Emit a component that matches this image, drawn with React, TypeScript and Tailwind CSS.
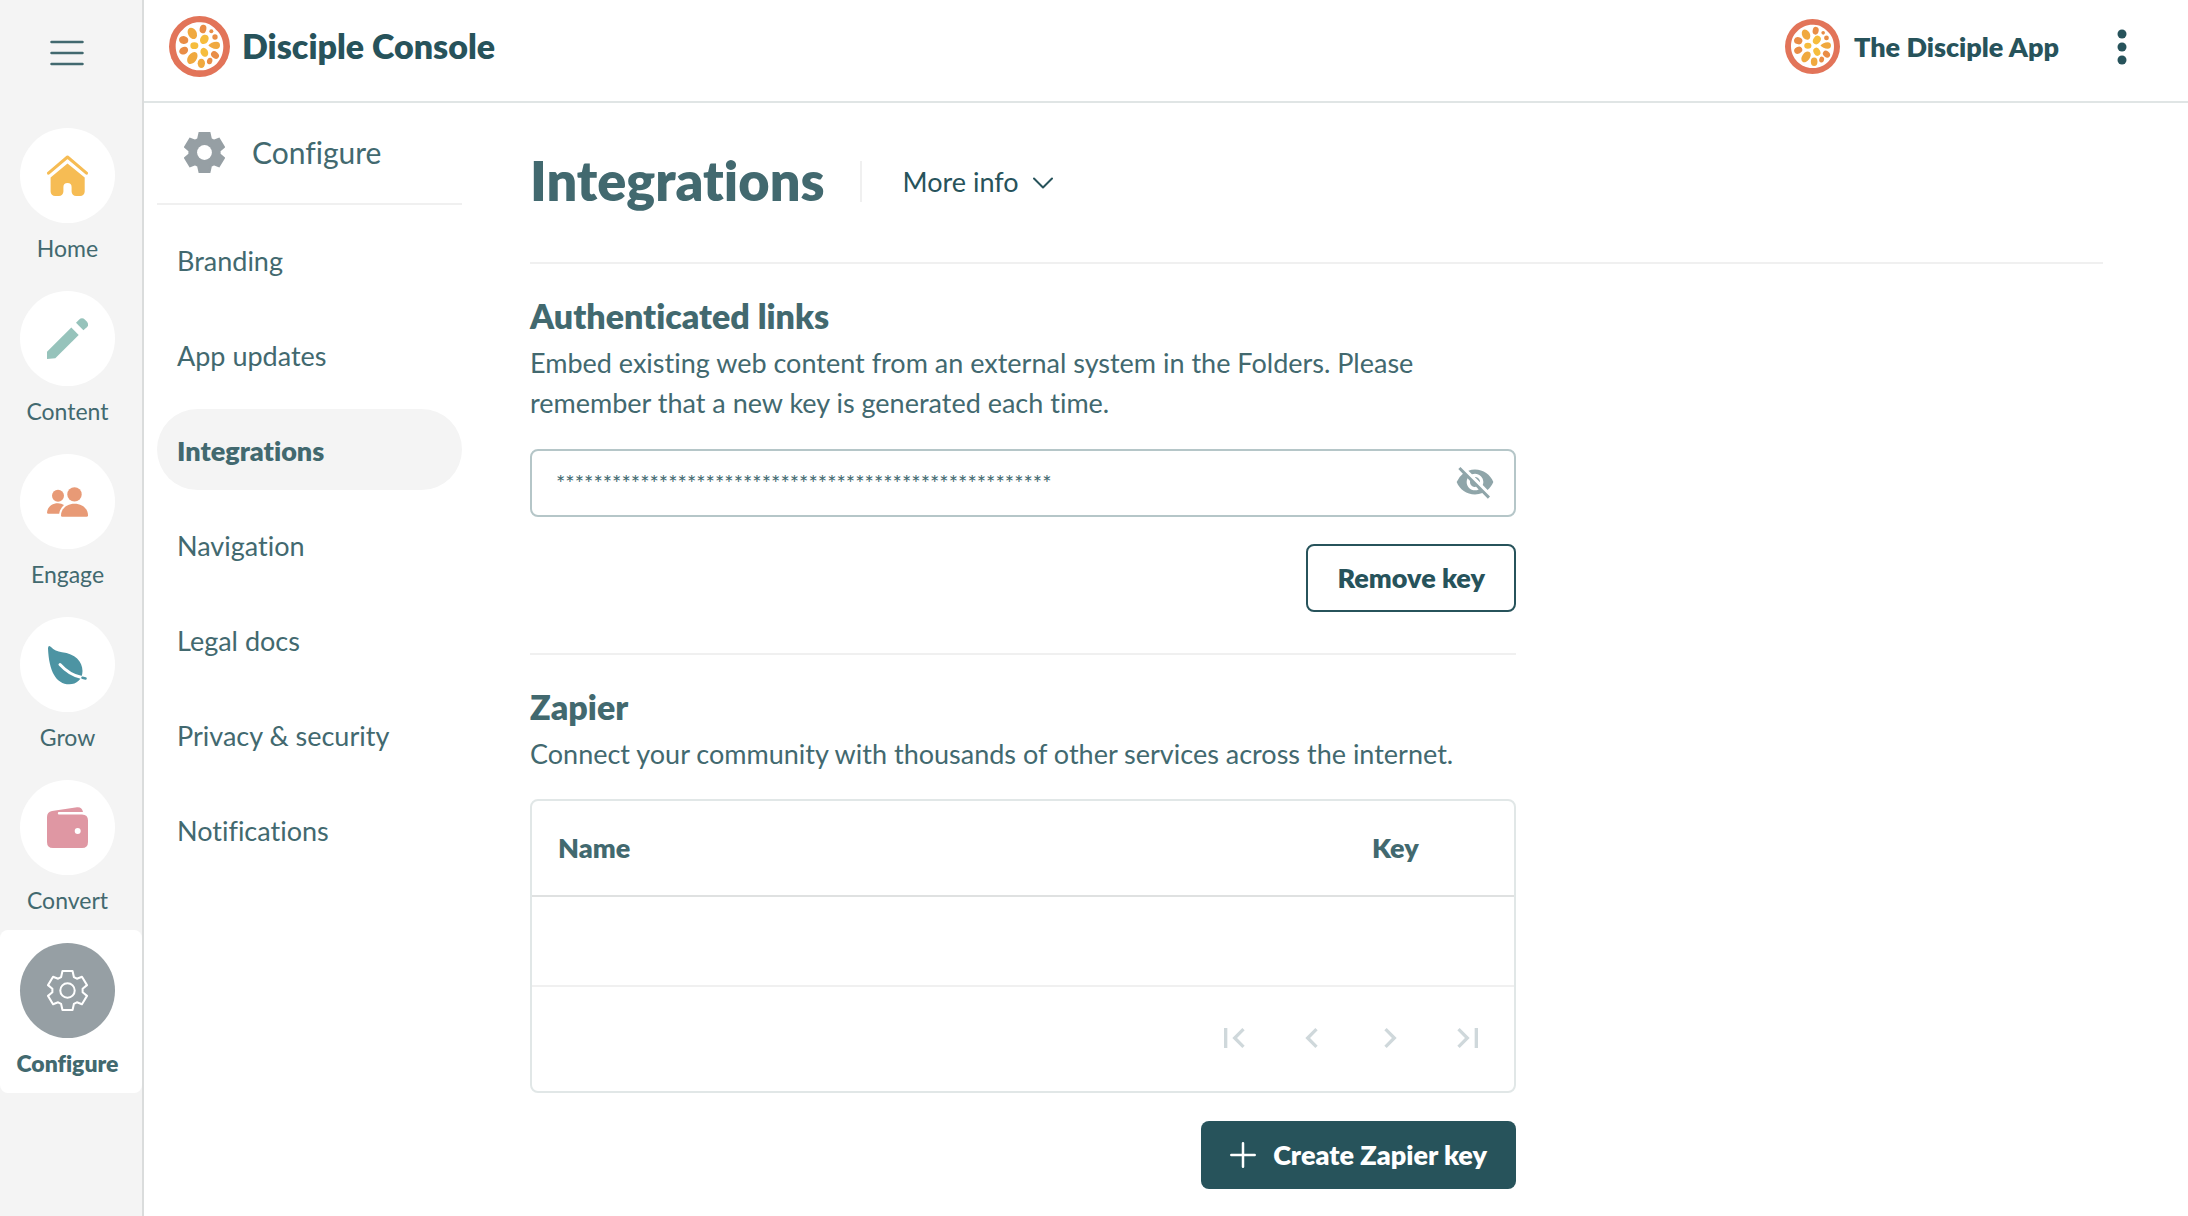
import { useState } from "react";
import type { ReactNode } from "react";
import {
  MdChevronLeft,
  MdChevronRight,
  MdFirstPage,
  MdLastPage,
  MdVisibilityOff,
} from "react-icons/md";

interface NavItem {
  label: string;
  icon: ReactNode;
}

const MASKED_KEY = "*".repeat(53);

const GEAR_PATH =
  "M-15-58H15L19-40L28-35L43-41L58-16L45-5V5L58 16L43 41L28 35L19 40L15 58H-15L-19 40L-28 35L-43 41L-58 16L-45 5V-5L-58-16L-43-41L-28-35L-19-40Z";

function HomeIcon() {
  return (
    <svg viewBox="0 0 41 41" className="size-[41px]" fill="#f6bc54">
      <path d="M1.5 18.2L20.5 2l19 16.2" fill="none" stroke="#f6bc54" strokeWidth="3" strokeLinecap="round" strokeLinejoin="round" />
      <path d="M20.5 8.6l17.2 14v13.9a4.5 4.5 0 0 1-4.5 4.5h-4.1a4.5 4.5 0 0 1-4.5-4.5v-4.4a4.1 4.1 0 0 0-8.2 0v4.4a4.5 4.5 0 0 1-4.5 4.5H8.1a4.5 4.5 0 0 1-4.5-4.5V22.6z" />
    </svg>
  );
}

function PencilIcon() {
  return (
    <svg viewBox="0 0 41 41" className="size-[41px]" fill="#96c3bb">
      <path d="M0 41v-7.3L24.3 9.6l7.4 7.4L8.3 40.3z" />
      <path d="M29 4.7l3-3Q35-1 38 1.7l1.5 1.5q3 3.2.3 6l-3.4 3z" />
    </svg>
  );
}

function PeopleIcon() {
  return (
    <svg viewBox="0 0 41 41" className="size-[41px]" fill="#e89a76">
      <circle cx="11" cy="14.7" r="6" />
      <circle cx="27.5" cy="13.4" r="7.2" />
      <path d="M14 34.5C14 27.5 20 22.7 27.5 22.7S41 27.5 41 34.2q0 1.5-1.5 1.5H15.2Q14 35.7 14 34.5z" />
      <path d="M0 31.5C.5 26 5 22.3 11 22.3q3.5 0 6 1.7-4 3.4-4.8 8.7h-11Q0 32.7 0 31.5z" />
    </svg>
  );
}

function LeafIcon() {
  return (
    <svg viewBox="0 0 41 41" className="size-[41px]" fill="none" strokeLinecap="round">
      <path d="M1 4.5Q1 .2 4 3q4 4.5 11 5.2C28 9.5 35.5 17.5 35.5 27c0 8.5-6 13.3-13.2 13.3C9 40.3 2 27 1 4.5z" fill="#4d94a3" />
      <path d="M13 20.5C18 26 25.5 31.5 34 33.3" stroke="#fff" strokeWidth="3" />
      <path d="M35.5 33.8l3 .6" stroke="#4d94a3" strokeWidth="2.6" />
    </svg>
  );
}

function WalletIcon() {
  return (
    <svg viewBox="0 0 41 41" className="size-[41px]" fill="#df97a3">
      <path d="M0 10q0-5.2 5-6L30 .2q5-.6 6 4.8H12a1.2 1.2 0 0 0 0 2.4h23q6 0 6 6V35q0 6-6 6H6q-6 0-6-6z" />
      <circle cx="30.7" cy="24" r="3" fill="#fff" />
    </svg>
  );
}

function GearOutlineIcon() {
  return (
    <svg viewBox="-61 -61 122 122" className="size-[41px]" fill="none" stroke="#fff" strokeWidth="6" strokeLinejoin="round">
      <path d={GEAR_PATH} />
      <circle r="21.5" />
    </svg>
  );
}

function GearIcon() {
  return (
    <svg viewBox="-61 -61 122 122" className="size-[41px]" fill="#969fa4" stroke="#969fa4" strokeWidth="6">
      <path d={GEAR_PATH} />
      <circle r="22" fill="#fff" stroke="none" />
    </svg>
  );
}

function Logo({ className }: { className: string }) {
  return (
    <svg viewBox="27 24 183 183" className={className} aria-hidden="true">
      <circle cx="118.5" cy="115.5" r="91.5" fill="#e27459" />
      <path d="M118 43c20-2 38 8 50 22 14 12 22 30 22 50s-6 38-20 52c-14 12-30 21-50 20-20 1-38-8-52-21-13-13-21-31-21-51s7-38 21-50c13-14 30-22 50-22z" fill="#fff" />
      <g fill="#e98d46">
        <ellipse cx="129" cy="63" rx="10" ry="13" transform="rotate(12 129 63)" />
        <circle cx="154" cy="70" r="6" />
        <circle cx="165" cy="87" r="8" />
        <ellipse cx="71" cy="96" rx="14" ry="12" transform="rotate(15 71 96)" />
        <ellipse cx="71" cy="128" rx="14" ry="11" transform="rotate(-28 71 128)" />
        <ellipse cx="165" cy="141" rx="13" ry="10" transform="rotate(40 165 141)" />
        <ellipse cx="149" cy="159" rx="8" ry="10" transform="rotate(15 149 159)" />
      </g>
      <g fill="#f0a93f">
        <ellipse cx="97" cy="76" rx="13" ry="18" transform="rotate(-28 97 76)" />
        <ellipse cx="97" cy="150" rx="13" ry="20" transform="rotate(35 97 150)" />
        <ellipse cx="124" cy="166" rx="11" ry="14" />
        <path d="M145 112c5-6 14-11 24-11 8 0 11 5 11 11s-3 11-11 11c-10 0-19-5-24-11z" />
      </g>
      <g fill="#f6bd3d">
        <ellipse cx="133" cy="94" rx="12" ry="15" transform="rotate(35 133 94)" />
        <ellipse cx="103" cy="113" rx="12" ry="10" />
        <ellipse cx="133" cy="133" rx="11" ry="14" transform="rotate(-28 133 133)" />
      </g>
    </svg>
  );
}

const mainNav: NavItem[] = [
  { label: "Home", icon: <HomeIcon /> },
  { label: "Content", icon: <PencilIcon /> },
  { label: "Engage", icon: <PeopleIcon /> },
  { label: "Grow", icon: <LeafIcon /> },
  { label: "Convert", icon: <WalletIcon /> },
  { label: "Configure", icon: <GearOutlineIcon /> },
];

const configureNav = [
  "Branding",
  "App updates",
  "Integrations",
  "Navigation",
  "Legal docs",
  "Privacy & security",
  "Notifications",
];

function Sidebar() {
  const active = "Configure";

  return (
    <aside className="w-36 shrink-0 border-r-2 border-[#dadcdc] bg-[#f4f4f4]">
      <button type="button" aria-label="Menu" className="mt-10 mb-[49px] ml-[50px] block">
        <svg viewBox="0 0 34 26" className="h-[26px] w-[34px]" stroke="#42696f" strokeWidth="2.5" strokeLinecap="round">
          <path d="M1.5 2h31M1.5 13h31M1.5 24h31" />
        </svg>
      </button>
      <nav>
        {mainNav.map((item) => (
          <a
            key={item.label}
            href="#"
            className={`flex flex-col items-center rounded-lg pt-[13px] pr-[7px] pb-[18px] ${
              item.label === active ? "bg-white font-extrabold" : ""
            }`}
          >
            <span
              className={`flex size-[95px] items-center justify-center rounded-full ${
                item.label === active ? "bg-[#969fa4]" : "bg-white"
              }`}
            >
              {item.icon}
            </span>
            <span className="mt-[13px] text-[23px] leading-6">{item.label}</span>
          </a>
        ))}
      </nav>
    </aside>
  );
}

function Header() {
  return (
    <header className="flex h-[103px] items-center justify-between border-b-2 border-[#e0e5e5] pr-[61px] pb-2 pl-[25px] font-extrabold text-[#27535b]">
      <div className="flex items-center gap-3">
        <Logo className="size-[61px]" />
        <span className="pb-0.5 text-[34px] leading-10">Disciple Console</span>
      </div>
      <div className="flex items-center">
        <Logo className="size-[55px]" />
        <span className="ml-3.5 text-[27px] leading-10">The Disciple App</span>
        <button type="button" aria-label="More options" className="ml-[58px]">
          <svg viewBox="0 0 10 36" className="h-9 w-2.5" fill="currentColor">
            <circle cx="5" cy="5" r="4.5" />
            <circle cx="5" cy="18" r="4.5" />
            <circle cx="5" cy="31" r="4.5" />
          </svg>
        </button>
      </div>
    </header>
  );
}

function SubNav() {
  const [active, setActive] = useState("Integrations");

  return (
    <div className="w-[305px] shrink-0">
      <div className="flex h-[102px] items-center gap-[27px] border-b-2 border-[#f0f0f0] pb-0.5 pl-[27px]">
        <GearIcon />
        <span className="text-[30px]">Configure</span>
      </div>
      <nav className="mt-3.5 flex flex-col gap-3.5">
        {configureNav.map((label) => (
          <a
            key={label}
            href="#"
            onClick={() => setActive(label)}
            className={`flex h-[81px] items-center rounded-full px-5 pt-[3px] text-[27px] ${
              label === active ? "bg-[#f4f4f4] font-extrabold" : ""
            }`}
          >
            {label}
          </a>
        ))}
      </nav>
    </div>
  );
}

function KeysTable() {
  return (
    <div className="mt-[25px] rounded-lg border-2 border-[#e1e7e7]">
      <table className="w-full table-fixed text-[27px]">
        <thead>
          <tr className="h-[95px] border-b-2 border-[#dfe1e1] text-left">
            <th className="pl-[26px] font-extrabold">Name</th>
            <th className="w-[142px] font-extrabold">Key</th>
          </tr>
        </thead>
        <tbody>
          <tr className="h-[90px] border-b-2 border-[#f0f0f0]">
            <td colSpan={2}></td>
          </tr>
        </tbody>
      </table>
      {/* Pagination */}
      <div className="flex h-[104px] items-center justify-end gap-[38px] pr-[26px] pb-0.5 text-[40px] text-[#cfd8db]">
        <button type="button" aria-label="First page">
          <MdFirstPage />
        </button>
        <button type="button" aria-label="Previous page">
          <MdChevronLeft />
        </button>
        <button type="button" aria-label="Next page">
          <MdChevronRight />
        </button>
        <button type="button" aria-label="Last page">
          <MdLastPage />
        </button>
      </div>
    </div>
  );
}

export default function App() {
  return (
    <div className="flex min-h-screen bg-white font-[Lato,sans-serif] text-[#42696f] [font-variant-ligatures:none]">
      <Sidebar />
      <div className="min-w-0 flex-1">
        <Header />
        <div className="flex gap-[68px] pr-[85px] pl-[13px]">
          <SubNav />

          <main className="min-w-0 flex-1">
            {/* Page title */}
            <div className="flex items-center border-b-2 border-[#f0f0f0] pt-[46px] pb-[49px]">
              <h1 className="text-[54px] leading-[64px] font-extrabold">Integrations</h1>
              <div className="ml-[35px] h-[41px] w-0.5 bg-[#f0f0f0]" />
              <button type="button" className="ml-[41px] flex items-center gap-3.5 pt-[3px] text-[27px] text-[#27535b]">
                More info
                <svg viewBox="0 0 20 12" className="h-3 w-5" fill="none" stroke="currentColor" strokeWidth="2" strokeLinecap="round" strokeLinejoin="round">
                  <path d="M1 1.5l9 9 9-9" />
                </svg>
              </button>
            </div>

            <div className="max-w-[986px]">
              {/* Authenticated links */}
              <section className="border-b-2 border-[#f0f0f0] pt-8 pb-[41px]">
                <h2 className="text-[34px] leading-10 font-extrabold">
                  <label htmlFor="auth-key">Authenticated links</label>
                </h2>
                <p className="mt-[7px] text-[27px] leading-10">
                  Embed existing web content from an external system in the Folders. Please remember that a new key is generated each time.
                </p>
                <div className="mt-[26px] flex h-[68px] items-center rounded-lg border-2 border-[#b5c6c8] pr-[19px] pb-0.5 pl-6">
                  <input
                    id="auth-key"
                    type="text"
                    readOnly
                    value={MASKED_KEY}
                    className="min-w-0 flex-1 bg-transparent text-[22px] outline-none"
                  />
                  <button type="button" aria-label="Show key" className="text-[40px] text-[#8fa5a9]">
                    <MdVisibilityOff />
                  </button>
                </div>
                <div className="mt-[27px] flex justify-end">
                  <button
                    type="button"
                    className="h-[68px] rounded-lg border-2 border-[#27535b] px-[29px] text-[27px] font-extrabold text-[#27535b]"
                  >
                    Remove key
                  </button>
                </div>
              </section>

              {/* Zapier */}
              <section className="pt-8 pb-[27px]">
                <h2 className="text-[34px] leading-10 font-extrabold">Zapier</h2>
                <p className="mt-[7px] text-[27px] leading-10">
                  Connect your community with thousands of other services across the internet.
                </p>
                <KeysTable />
                <div className="mt-7 flex justify-end">
                  <button
                    type="button"
                    className="flex h-[68px] items-center gap-[17px] rounded-lg bg-[#27535b] px-[29px] text-[27px] font-extrabold text-white"
                  >
                    <svg viewBox="0 0 26 26" className="size-[26px]" stroke="currentColor" strokeWidth="2.5" strokeLinecap="round">
                      <path d="M13 1.3v23.4M1.3 13h23.4" />
                    </svg>
                    Create Zapier key
                  </button>
                </div>
              </section>
            </div>
          </main>
        </div>
      </div>
    </div>
  );
}
